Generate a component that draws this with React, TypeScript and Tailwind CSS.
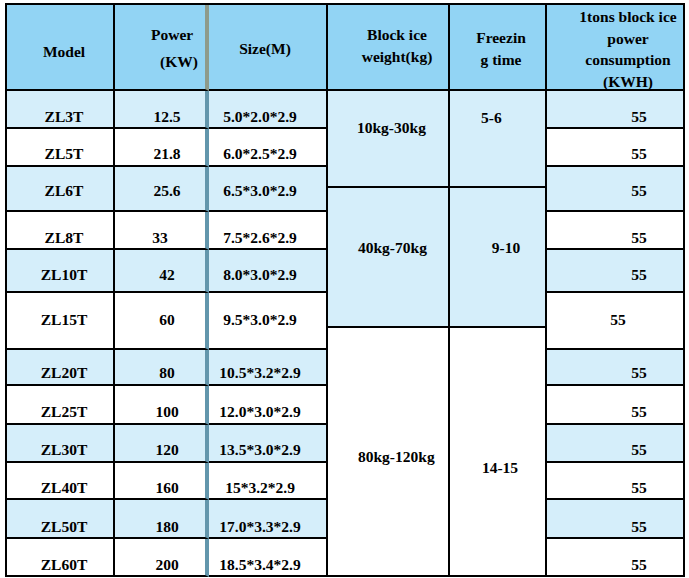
import React from "react"

type Row = {
  model: string
  power: string
  size: string
  blue: boolean
  pos: string
  pt: string
  powerPad: string
  kwhPad: string
}

// left/right rows share the same row lines; the middle columns have their own merged cells
const rows: Row[] = [
  { model: "ZL3T", power: "12.5", size: "5.0*2.0*2.9", blue: true, pos: "row-start-2 row-end-3", pt: "pt-[17px]", powerPad: "pl-[14px]", kwhPad: "pl-[48px]" },
  { model: "ZL5T", power: "21.8", size: "6.0*2.5*2.9", blue: false, pos: "row-start-3 row-end-4", pt: "pt-[16px]", powerPad: "pl-[14px]", kwhPad: "pl-[48px]" },
  { model: "ZL6T", power: "25.6", size: "6.5*3.0*2.9", blue: true, pos: "row-start-4 row-end-6", pt: "pt-[15px]", powerPad: "pl-[14px]", kwhPad: "pl-[48px]" },
  { model: "ZL8T", power: "33", size: "7.5*2.6*2.9", blue: false, pos: "row-start-6 row-end-7", pt: "pt-[17px]", powerPad: "pl-0", kwhPad: "pl-[48px]" },
  { model: "ZL10T", power: "42", size: "8.0*3.0*2.9", blue: true, pos: "row-start-7 row-end-8", pt: "pt-[16px]", powerPad: "pl-[14px]", kwhPad: "pl-[48px]" },
  { model: "ZL15T", power: "60", size: "9.5*3.0*2.9", blue: false, pos: "row-start-8 row-end-10", pt: "pt-[18px]", powerPad: "pl-[14px]", kwhPad: "pl-[6px]" },
  { model: "ZL20T", power: "80", size: "10.5*3.2*2.9", blue: true, pos: "row-start-10 row-end-11", pt: "pt-[14px]", powerPad: "pl-[14px]", kwhPad: "pl-[48px]" },
  { model: "ZL25T", power: "100", size: "12.0*3.0*2.9", blue: false, pos: "row-start-11 row-end-12", pt: "pt-[17px]", powerPad: "pl-[14px]", kwhPad: "pl-[48px]" },
  { model: "ZL30T", power: "120", size: "13.5*3.0*2.9", blue: true, pos: "row-start-12 row-end-13", pt: "pt-[16px]", powerPad: "pl-[14px]", kwhPad: "pl-[48px]" },
  { model: "ZL40T", power: "160", size: "15*3.2*2.9", blue: false, pos: "row-start-13 row-end-14", pt: "pt-[16px]", powerPad: "pl-[14px]", kwhPad: "pl-[48px]" },
  { model: "ZL50T", power: "180", size: "17.0*3.3*2.9", blue: true, pos: "row-start-14 row-end-15", pt: "pt-[18px]", powerPad: "pl-[14px]", kwhPad: "pl-[48px]" },
  { model: "ZL60T", power: "200", size: "18.5*3.4*2.9", blue: false, pos: "row-start-15 row-end-16", pt: "pt-[17px]", powerPad: "pl-[14px]", kwhPad: "pl-[48px]" },
]

const cell = "flex border-r-2 border-b-2 border-black leading-[17px]"

export default function App() {
  return (
    <div className="min-h-screen bg-white pl-[5px] pt-[3px] [font-family:'Liberation_Serif','Times_New_Roman',serif] text-[15.5px] font-bold text-black">
      <div className="grid w-[680px] grid-cols-[108px_94px_119px_122px_97px_138px] grid-rows-[86px_38px_38px_21px_24px_38px_43px_35px_22px_36px_39px_38px_37px_39px_38px] border-t-2 border-l-2 border-black">
        {/* header */}
        <div className={`${cell} col-start-1 row-start-1 justify-center bg-[#92d4f4] pl-[8px] pt-[38px]`}>Model</div>
        <div className={`${cell} col-start-2 row-start-1 flex-col border-r-[4px] border-r-[#8e9b8b] bg-[#92d4f4] pt-[21px]`}>
          <span className="pl-[36px]">Power</span>
          <span className="mt-[10px] pl-[45px]">(KW)</span>
        </div>
        <div className={`${cell} col-start-3 row-start-1 justify-center bg-[#92d4f4] pr-[5px] pt-[35px]`}>Size(M)</div>
        <div className={`${cell} col-start-4 row-start-1 flex-col items-center bg-[#92d4f4] pl-[18px] pt-[19px] leading-[22px]`}>
          <span>Block ice</span>
          <span>weight(kg)</span>
        </div>
        <div className={`${cell} col-start-5 row-start-1 flex-col items-center bg-[#92d4f4] pl-[7px] pt-[22px] leading-[22px]`}>
          <span>Freezin</span>
          <span>g time</span>
        </div>
        <div className={`${cell} col-start-6 row-start-1 flex-col items-center bg-[#92d4f4] pl-[26px] pt-[1px] leading-[21.7px]`}>
          <span>1tons block ice</span>
          <span>power</span>
          <span>consumption</span>
          <span>(KWH)</span>
        </div>

        {/* left group + right column */}
        {rows.map((r) => (
          <React.Fragment key={r.model}>
            <div className={`${cell} col-start-1 ${r.pos} ${r.pt} justify-center pl-[8px] ${r.blue ? "bg-[#d5eefa]" : "bg-white"}`}>
              {r.model}
            </div>
            <div className={`${cell} col-start-2 ${r.pos} ${r.pt} ${r.powerPad} justify-center border-r-[4px] border-r-[#6396ac] ${r.blue ? "bg-[#d5eefa]" : "bg-white"}`}>
              {r.power}
            </div>
            <div className={`${cell} col-start-3 ${r.pos} ${r.pt} justify-center pr-[15px] ${r.blue ? "bg-[#d5eefa]" : "bg-white"}`}>
              {r.size}
            </div>
            <div className={`${cell} col-start-6 ${r.pos} ${r.pt} ${r.kwhPad} justify-center ${r.blue ? "bg-[#d5eefa]" : "bg-white"}`}>
              55
            </div>
          </React.Fragment>
        ))}

        {/* middle merged cells */}
        <div className={`${cell} col-start-4 row-start-2 row-end-5 bg-[#d5eefa] pl-[29px] pt-[28px]`}>10kg-30kg</div>
        <div className={`${cell} col-start-5 row-start-2 row-end-5 bg-[#d5eefa] pl-[31px] pt-[18px]`}>5-6</div>
        <div className={`${cell} col-start-4 row-start-5 row-end-9 bg-[#d5eefa] pl-[30px] pt-[51px]`}>40kg-70kg</div>
        <div className={`${cell} col-start-5 row-start-5 row-end-9 justify-center bg-[#d5eefa] pl-[17px] pt-[51px]`}>9-10</div>
        <div className={`${cell} col-start-4 row-start-9 row-end-16 bg-white pl-[30px] pt-[120px]`}>80kg-120kg</div>
        <div className={`${cell} col-start-5 row-start-9 row-end-16 justify-center bg-white pl-[5px] pt-[131px]`}>14-15</div>
      </div>
    </div>
  )
}
